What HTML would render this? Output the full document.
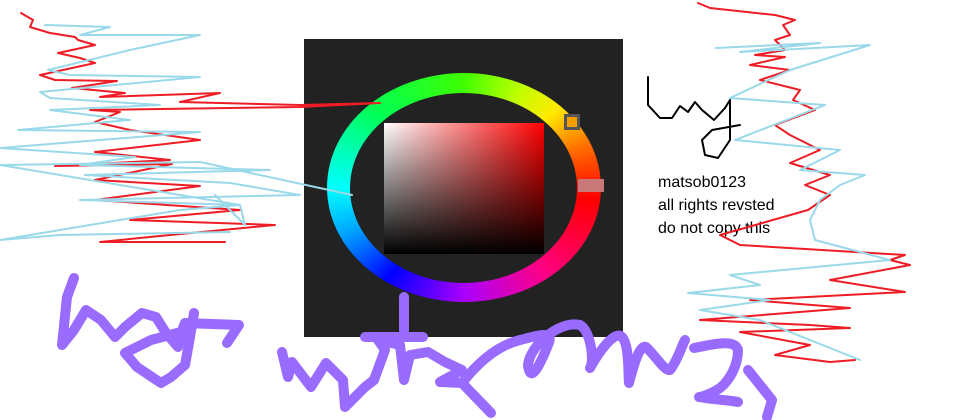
<!DOCTYPE html>
<html><head><style>
html,body{margin:0;padding:0;background:#fff;width:960px;height:420px;overflow:hidden;position:relative;font-family:"Liberation Sans",sans-serif}
.a{position:absolute}
#bg{left:304px;top:39px;width:319px;height:298px;background:#222}
#ring{left:327px;top:73px;width:274px;height:229px;border-radius:50%;
background:conic-gradient(from 0deg,hsl(105,100%,50%),hsl(75,100%,50%) 30deg,hsl(55,100%,50%) 50deg,hsl(25,100%,50%) 72deg,hsl(0,100%,50%) 95deg,hsl(330,100%,50%) 135deg,hsl(280,100%,50%) 180deg,hsl(240,100%,50%) 220deg,hsl(200,100%,50%) 250deg,hsl(180,100%,50%) 270deg,hsl(140,100%,50%) 310deg,hsl(105,100%,50%) 360deg)}
#inner{left:350px;top:93px;width:227px;height:190px;border-radius:50%;background:#222}
#sq{left:384px;top:123px;width:160px;height:131px;background:linear-gradient(to bottom,rgba(0,0,0,0),#000),linear-gradient(to right,#fff,#f00)}
#sel{left:564px;top:114px;width:10px;height:10px;border:3px solid #555;background:#f5a000}
#mk{left:578px;top:179px;width:26px;height:13px;background:#c87878}
#txt{left:658px;top:171px;font-size:16px;line-height:23px;color:#000}
</style></head><body>
<div class="a" id="bg"></div>
<div class="a" id="ring"></div>
<div class="a" id="inner"></div>
<div class="a" id="sq"></div>
<div class="a" id="sel"></div>
<div class="a" id="mk"></div>
<div class="a" id="txt">matsob0123<br>all rights revsted<br>do not copy this</div>
<svg class="a" style="left:0;top:0" width="960" height="420" viewBox="0 0 960 420">
<g fill="none" stroke-linejoin="round" stroke-linecap="round">
<polyline stroke="#ee1c24" stroke-width="2" points="21,13 33,20 30,27 50,33 75,37 78,40 95,45 58,53 80,58 95,63 40,75 55,80 117,81 72,88 125,93 100,97 220,93 180,102 300,105 380,103 300,107 90,110 120,112 95,122 130,130 200,140 95,152 170,160 55,166 172,164 95,180 200,186 95,200 240,210 130,220 275,225 170,235 100,242 225,242"/>
<polyline stroke="#99d9ea" stroke-width="2" points="45,25 110,27 80,35 200,35 130,50 48,70 70,75 200,77 40,92 50,98 160,105 50,110 130,120 18,130 200,132 0,148 135,157 80,165 270,170 85,175 230,183 300,195 80,200 240,205 180,210 0,240 60,235 230,232"/>
<polyline stroke="#99d9ea" stroke-width="2" points="215,195 245,225 240,205 0,165 200,162 352,195"/>
<polyline stroke="#ee1c24" stroke-width="2" points="698,3 710,8 775,15 795,20 783,25 790,35 775,40 785,50 755,55 785,57 750,65 790,70 760,80 800,90 793,100 815,110 775,125 790,135 800,140 820,150 790,163 830,175 805,185 830,195 808,210 720,235 740,245 905,255 890,260 910,265 830,280 905,292 750,300 850,308 700,320 810,325 850,328 740,332 810,345 775,355 830,362 855,360"/>
<polyline stroke="#99d9ea" stroke-width="2" points="716,48 820,43 740,52 870,45 790,70 730,98 825,105 735,140 840,150 800,170 865,175 840,185 820,200 810,220 815,240 890,260 730,275 760,285 688,293 770,300 700,310 760,320 860,360"/>
<polyline stroke="#000" stroke-width="2" points="648,77 648,105 660,118 672,118 680,106 688,112 695,102 702,110 714,120 725,108 730,100 730,140 718,158 705,155 702,140 712,130 740,125"/>
<g stroke="#9a6bff" stroke-width="10">
<polyline points="74,278 67,297 62,345 74,330 86,310 101,320 115,337 125,327 142,313 156,317 166,333 178,347 181,333 185,323 239,325 227,343"/>
<polyline points="181,332 151,340 125,353 137,367 161,383 171,377 185,365 190,337 194,313"/>
<polyline points="404,297 404,330"/><polyline points="365,337 423,337"/>
<polyline points="282,352 288,377 292,362 311,387 326,363 343,380 345,407 355,397 365,387 374,380 385,350 378,340 400,345 404,380 410,355 428,352 445,362 462,370 440,382 462,383 491,413"/>
<path d="M462,383 C480,360 500,345 520,340 C540,335 555,330 548,345 C540,365 530,385 528,365 C530,345 560,320 580,325 C590,330 595,360 590,368 C600,350 615,330 622,337 C630,345 628,380 629,383 C635,360 640,345 646,347 C655,355 665,372 670,370 C678,360 682,345 685,340"/>
<path d="M694,348 C710,345 735,338 738,350 C738,365 730,380 720,388 C710,395 700,397 699,397 C715,400 730,400 738,402"/>
<polyline points="748,370 772,400 767,417"/>
</g>
</g></svg>
</body></html>
